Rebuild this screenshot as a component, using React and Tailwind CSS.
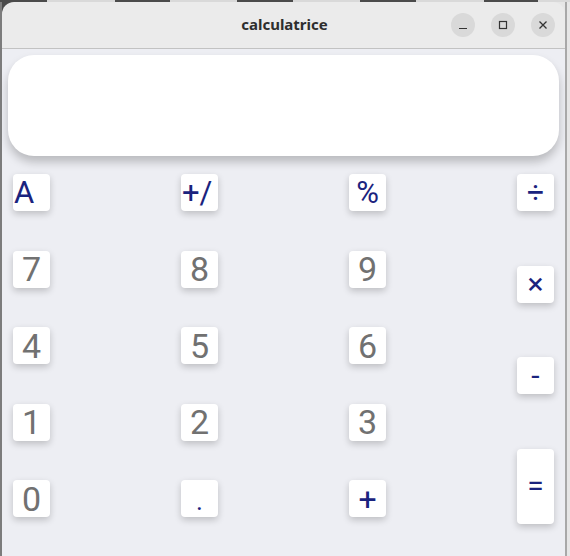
import React from "react";

const NAVY = "text-[#1a237e]";
const GRAY = "text-[#717171]";

function Key({ label, navy, tall, left, size }) {
  return (
    <div
      className={
        "w-[37px] bg-white rounded-[4px] shadow-[0_3px_7px_rgba(0,0,0,0.2)] flex items-center overflow-hidden leading-none whitespace-nowrap " +
        (tall ? "h-[75px] " : "h-[37px] ") +
        (left ? "justify-start pl-[1px] " : "justify-center ") +
        (navy ? NAVY + " " : GRAY + " ") +
        (size || (navy ? "text-[30px]" : "text-[34px]"))
      }
    >
      {label}
    </div>
  );
}

function Col({ children, h }) {
  return <div className={"flex flex-col justify-between " + h}>{children}</div>;
}

export default function App() {
  const segs = [
    ["w-[47px]", "bg-[#4b4b4b]"],
    ["w-[68px]", "bg-[#d9d9d9]"],
    ["w-[55px]", "bg-[#4b4b4b]"],
    ["w-[67px]", "bg-[#d9d9d9]"],
    ["w-[56px]", "bg-[#4b4b4b]"],
    ["w-[67px]", "bg-[#d9d9d9]"],
    ["w-[56px]", "bg-[#4b4b4b]"],
    ["w-[68px]", "bg-[#d9d9d9]"],
    ["w-[54px]", "bg-[#4b4b4b]"],
    ["flex-1", "bg-[#d9d9d9]"],
  ];
  return (
    <div className="w-[570px] h-[556px] overflow-hidden flex flex-col bg-[#e8e8e8] font-['Roboto',sans-serif]">
      <div className="h-[2px] flex shrink-0">
        {segs.map(([w, c], i) => (
          <div key={i} className={w + " " + c} />
        ))}
      </div>
      <div className="flex flex-1 min-h-0 bg-[linear-gradient(to_right,#4b4b4b_0,#4b4b4b_20px,#e6e6e6_20px)]">
        <div className="w-[2px] bg-[#7c7c7c] shrink-0" />
        <div className="w-[563px] shrink-0 flex flex-col rounded-t-[12px] overflow-hidden">
          <div className="h-[47px] shrink-0 bg-[#ebebeb] border-b border-[#c2c2c2] flex items-center relative">
            <div className="flex-1 text-center text-[15px] font-bold text-[#2e2e2e] font-['Noto_Sans',sans-serif] pl-[2px] pb-[2px]">
              calculatrice
            </div>
            <div className="absolute right-[10px] top-[11px] flex gap-[16px]">
              <div className="w-[24px] h-[24px] rounded-full bg-[#d9d9d9] flex items-center justify-center">
                <svg width="10" height="10" viewBox="0 0 10 10">
                  <path d="M1 8.5H9" stroke="#333" strokeWidth="1.2" />
                </svg>
              </div>
              <div className="w-[24px] h-[24px] rounded-full bg-[#d9d9d9] flex items-center justify-center">
                <svg width="10" height="10" viewBox="0 0 10 10">
                  <rect x="1.5" y="1.5" width="7" height="7" fill="none" stroke="#333" strokeWidth="1.2" />
                </svg>
              </div>
              <div className="w-[24px] h-[24px] rounded-full bg-[#d9d9d9] flex items-center justify-center">
                <svg width="10" height="10" viewBox="0 0 10 10">
                  <path d="M1.5 1.5L8.5 8.5M8.5 1.5L1.5 8.5" stroke="#333" strokeWidth="1.3" />
                </svg>
              </div>
            </div>
          </div>
          <div className="flex-1 bg-[#edeef3] px-[6px] pt-[6px]">
            <div className="h-[101px] rounded-[26px] bg-white shadow-[0_6px_10px_rgba(0,0,0,0.22)]" />
            <div className="mt-[18px] px-[5px] flex justify-between items-start">
              <Col h="h-[343px]">
                <Key label="A" navy left size="text-[31px]" />
                <Key label="7" />
                <Key label="4" />
                <Key label="1" />
                <Key label="0" />
              </Col>
              <Col h="h-[343px]">
                <Key label="+/" navy left size="text-[31px]" />
                <Key label="8" />
                <Key label="5" />
                <Key label="2" />
                <Key label="." navy size="text-[26px] pt-[5px]" />
              </Col>
              <Col h="h-[343px]">
                <Key label="%" navy size="text-[31px]" />
                <Key label="9" />
                <Key label="6" />
                <Key label="3" />
                <Key label="+" navy size="text-[32px]" />
              </Col>
              <Col h="h-[350px]">
                <Key label="÷" navy />
                <Key label="×" navy />
                <Key label="-" navy />
                <Key label="=" navy tall />
              </Col>
            </div>
          </div>
        </div>
        <div className="w-[2px] bg-[#a8a8a8] shrink-0" />
        <div className="flex-1 bg-[#e6e6e6]" />
      </div>
    </div>
  );
}
